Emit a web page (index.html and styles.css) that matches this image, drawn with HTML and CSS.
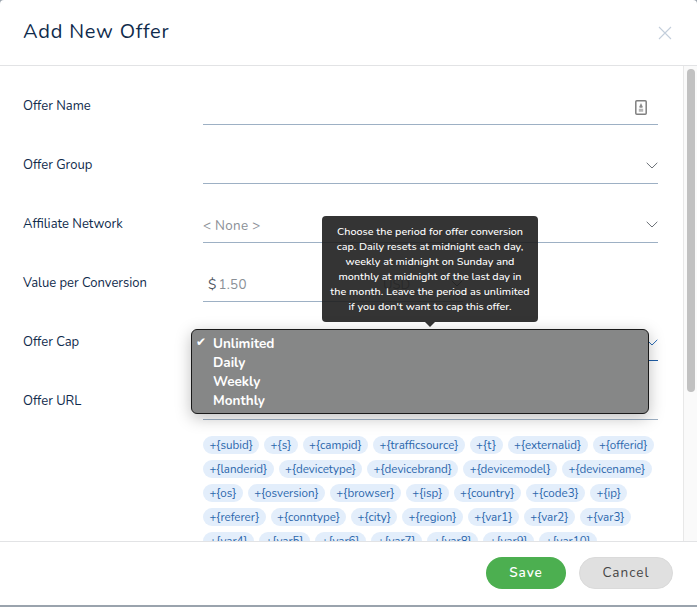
FILE: index.html
```html
<!DOCTYPE html>
<html lang="en">
<head>
<meta charset="utf-8">
<title>Add New Offer</title>
<link rel="stylesheet" href="styles.css">
</head>
<body>
<div class="modal">
  <header class="modal-head">
    <h1 class="modal-title">Add New Offer</h1>
    <svg class="close" width="14" height="14" viewBox="0 0 14 14"><path d="M1 1l12 12M13 1L1 13"/></svg>
  </header>
  <div class="modal-mid">
    <main class="form">
      <div class="row">
        <label class="label">Offer Name</label>
        <div class="field">
          <svg class="contact" width="12" height="15" viewBox="0 0 12 15"><rect x=".8" y=".8" width="10.400" height="13.400" rx="1"/><path class="fill" d="M6 3l1.500 3.200v1.500H4.500V6.200z"/><path class="fill lite" d="M3.800 8.800h4.400v3H3.800z"/></svg>
        </div>
      </div>
      <div class="row">
        <label class="label">Offer Group</label>
        <div class="field"><svg class="chev" width="12" height="7" viewBox="0 0 12 7"><path d="M.700.800L6 6l5.300-5.200"/></svg></div>
      </div>
      <div class="row">
        <label class="label">Affiliate Network</label>
        <div class="field"><span class="value">&lt; None &gt;</span><svg class="chev" width="12" height="7" viewBox="0 0 12 7"><path d="M.700.800L6 6l5.300-5.200"/></svg></div>
      </div>
      <div class="row">
        <label class="label">Value per Conversion</label>
        <div class="field short">
          <span class="dollar">$</span><span class="value">1.50</span><span class="usd">USD</span>
          <svg class="chev" width="12" height="7" viewBox="0 0 12 7"><path d="M.700.800L6 6l5.300-5.200"/></svg>
        </div>
      </div>
      <div class="row">
        <label class="label">Offer Cap</label>
        <div class="field active"><svg class="chev blue" width="12" height="7" viewBox="0 0 12 7"><path d="M.700.800L6 6l5.300-5.200"/></svg></div>
      </div>
      <div class="row">
        <label class="label">Offer URL</label>
        <div class="field"></div>
      </div>
      <div class="chips">
        <div class="chip-row"><span class="chip">+{subid}</span><span class="chip">+{s}</span><span class="chip">+{campid}</span><span class="chip">+{trafficsource}</span><span class="chip">+{t}</span><span class="chip">+{externalid}</span><span class="chip">+{offerid}</span></div>
        <div class="chip-row"><span class="chip">+{landerid}</span><span class="chip">+{devicetype}</span><span class="chip">+{devicebrand}</span><span class="chip">+{devicemodel}</span><span class="chip">+{devicename}</span></div>
        <div class="chip-row"><span class="chip">+{os}</span><span class="chip">+{osversion}</span><span class="chip">+{browser}</span><span class="chip">+{isp}</span><span class="chip">+{country}</span><span class="chip">+{code3}</span><span class="chip">+{ip}</span></div>
        <div class="chip-row"><span class="chip">+{referer}</span><span class="chip">+{conntype}</span><span class="chip">+{city}</span><span class="chip">+{region}</span><span class="chip">+{var1}</span><span class="chip">+{var2}</span><span class="chip">+{var3}</span></div>
        <div class="chip-row"><span class="chip">+{var4}</span><span class="chip">+{var5}</span><span class="chip">+{var6}</span><span class="chip">+{var7}</span><span class="chip">+{var8}</span><span class="chip">+{var9}</span><span class="chip">+{var10}</span></div>
      </div>
    </main>
    <div class="track"><div class="thumb"></div></div>
  </div>
  <footer class="modal-foot">
    <button class="btn save">Save</button>
    <button class="btn cancel">Cancel</button>
  </footer>

  <div class="tooltip">Choose the period for offer conversion<br>cap. Daily resets at midnight each day,<br>weekly at midnight on Sunday and<br>monthly at midnight of the last day in<br>the month. Leave the period as unlimited<br>if you don't want to cap this offer.</div>
  <ul class="menu">
    <li class="opt checked">Unlimited</li>
    <li class="opt">Daily</li>
    <li class="opt">Weekly</li>
    <li class="opt">Monthly</li>
  </ul>
</div>
</body>
</html>
```
FILE: styles.css
```css
* { box-sizing: border-box; }
html, body { margin: 0; padding: 0; height: 100%; overflow: hidden; background: #9aa3ad; }
body { font-family: "Nunito", "Lato", "Open Sans", sans-serif; color: #0f2b4c; }
.modal {
  position: relative;
  width: 697px; height: 605px;
  background: #fff;
  border-radius: 4px 4px 0 0;
  display: flex; flex-direction: column;
  overflow: hidden;
}
.modal-head {
  height: 66px; flex: none;
  border-bottom: 1px solid #e2e3e5;
  display: flex; align-items: center; justify-content: space-between;
  padding: 0 25px 0 23px;
}
.modal-title { margin: 0; font-size: 20px; font-weight: 400; letter-spacing: .8px; color: #0f2b4c; padding-bottom: 3px; }
.close { fill: none; stroke: #c3cedb; stroke-width: 1.100; }
.modal-mid { flex: 1; min-height: 0; display: flex; }
.form { flex: 1; min-width: 0; overflow: hidden; padding: 0 25px 0 23px; }
.row { display: flex; height: 59px; }
.label { width: 180px; flex: none; font-size: 13px; line-height: 18px; padding-top: 31px; color: #0f2b4c; }
.field {
  flex: 1; height: 59px;
  border-bottom: 1px solid #9db0c4;
  display: flex; align-items: flex-end;
  padding-bottom: 7px;
  position: relative;
}
.field.short { flex: none; width: 260px; }
.field.active { border-bottom-color: #1f5fa8; }
.value { font-size: 13.400px; line-height: 18px; color: #8a8f96; letter-spacing: .3px; }
.dollar { font-size: 14px; line-height: 18px; color: #4d5560; margin: 0 2px 0 5px; }
.usd { position: absolute; left: 180px; bottom: 7px; font-size: 13px; line-height: 18px; color: #8a8f96; }
.chev { position: absolute; right: 0; bottom: 14px; fill: none; stroke: #6b7076; stroke-width: 1; }
.chev.blue { stroke: #2b6cb5; }
.contact { position: absolute; right: 11px; bottom: 9px; fill: none; stroke: #7f7f7f; stroke-width: 1.500; }
.contact .fill { fill: #8c8c8c; stroke: none; }
.contact .lite { fill: #b5b5b5; }
.chips { display: flex; flex-direction: column; gap: 6px; margin: 16px 0 0 180px; }
.chip-row { display: flex; gap: 5px; }
.chip {
  height: 18px; padding: 0 6.400px; border-radius: 9px;
  background: #e3eefb; color: #2a66ac;
  font-size: 11.600px; line-height: 18px;
  white-space: nowrap;
}
.track { width: 14px; flex: none; background: #fafafa; border-left: 1px solid #e8e8e8; padding: 3px 2px 0 3px; }
.thumb { height: 323px; background: #c1c1c1; border-radius: 4px; }
.modal-foot {
  height: 64px; flex: none;
  border-top: 1px solid #e2e3e5;
  display: flex; justify-content: flex-end; align-items: center; gap: 13px;
  padding: 0 24px 2px 0;
}
.btn { height: 32px; border-radius: 16px; border: 0; font: inherit; font-size: 13.500px; letter-spacing: 1px; padding: 0; }
.save { width: 80px; background: #4caf50; color: #fff; font-weight: 600; }
.cancel { width: 94px; background: #e0e0e0; color: #454545; border: 1px solid #dadada; }
.tooltip {
  position: absolute; left: 322px; top: 216px;
  width: 216px; height: 106px;
  padding: 8px 0;
  background: rgba(30, 30, 30, .9);
  border-radius: 4px;
  color: #fff; font-size: 10.800px; font-weight: 500; line-height: 15px; text-align: center;
  white-space: nowrap;
}
.tooltip::after {
  content: ""; position: absolute; left: 103px; top: 106px;
  border: 5px solid transparent; border-bottom: 0; border-top-color: rgba(30, 30, 30, .9);
}
.menu {
  position: absolute; left: 191px; top: 329px;
  width: 458px; height: 85px;
  margin: 0; padding: 4px 0 0 21px;
  list-style: none;
  background: #868787;
  border: 1px solid #1a1a1a;
  border-radius: 6px;
  box-shadow: 0 4px 16px rgba(0, 0, 0, .25);
}
.opt { position: relative; font-size: 13.500px; line-height: 19px; font-weight: 700; color: #fff; }
.opt.checked::before { content: "\2714"; position: absolute; left: -17px; top: -1px; font-size: 12px; font-weight: 400; font-family: "DejaVu Sans", sans-serif; }
```
